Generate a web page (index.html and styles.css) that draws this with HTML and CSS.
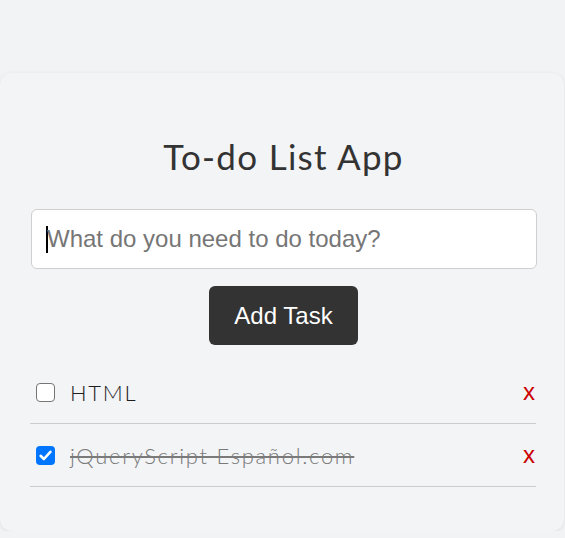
FILE: index.html
```html
<!DOCTYPE html>
<html lang="es">
<head>
<meta charset="utf-8">
<title>To-do List App</title>
<link rel="stylesheet" href="styles.css">
</head>
<body>
<div class="card">
  <h1 class="title">To-do List App</h1>
  <div class="input-box"><span class="caret"></span><span class="placeholder">What do you need to do today?</span></div>
  <button class="add-btn">Add Task</button>
  <ul class="list">
    <li class="item">
      <span class="check"></span>
      <span class="label">HTML</span>
      <span class="del">x</span>
    </li>
    <li class="item done">
      <span class="check checked"><svg viewBox="0 0 19 19" width="19" height="19"><path d="M4.6 9.8 L7.9 13 L14.4 5.8" fill="none" stroke="#fff" stroke-width="2.6" stroke-linecap="round" stroke-linejoin="round"/></svg></span>
      <span class="label">jQueryScript Español.com</span>
      <span class="del">x</span>
    </li>
  </ul>
</div>
</body>
</html>
```
FILE: styles.css
```css
html, body {
  margin: 0;
  padding: 0;
  background: #f2f3f5;
}
body {
  padding-top: 73px;
  font-family: "Lato", "Noto Sans", sans-serif;
}
.card {
  width: 564px;
  box-sizing: border-box;
  margin-left: 0;
  background: #f3f4f6;
  border-radius: 12px;
  box-shadow: 0 1px 4px rgba(0, 0, 0, 0.09);
  padding: 63px 27px 44px 30px;
  display: flex;
  flex-direction: column;
  align-items: stretch;
}
.title {
  margin: 0;
  text-align: center;
  font-size: 35px;
  font-weight: 400;
  line-height: 40px;
  color: #333;
  letter-spacing: 1.3px;
}
.input-box {
  margin-top: 33px;
  margin-left: 1px;
  height: 60px;
  box-sizing: border-box;
  border: 1px solid #cfcfcf;
  border-radius: 6px;
  background: #fff;
  display: flex;
  align-items: center;
  padding-left: 14px;
  font-family: "Liberation Sans", Arial, sans-serif;
  font-size: 24px;
  color: #767676;
}
.caret {
  width: 2px;
  height: 27px;
  background: #000;
  margin-right: -1px;
}
.add-btn {
  align-self: center;
  margin-top: 17px;
  width: 149px;
  height: 59px;
  border: none;
  border-radius: 6px;
  background: #333;
  color: #fff;
  font-family: "Liberation Sans", Arial, sans-serif;
  font-size: 24px;
}
.list {
  list-style: none;
  margin: 16px 1px 0 0;
  padding: 0;
}
.item {
  height: 62px;
  border-bottom: 1px solid #cccccc;
  display: flex;
  align-items: center;
  font-size: 22px;
  font-weight: 300;
  color: #1e1e1e;
}
.check {
  width: 19px;
  height: 19px;
  box-sizing: border-box;
  border: 1.5px solid #767676;
  border-radius: 4px;
  background: #fff;
  margin-left: 6px;
  margin-right: 15px;
  display: flex;
}
.check.checked {
  border: none;
  background: #0075ff;
}
.label {
  flex: 1;
  letter-spacing: 1.7px;
}
.done .label {
  color: #7a7a7a;
  text-decoration: line-through;
}
.del {
  color: #cc0000;
  font-family: "Liberation Sans", Arial, sans-serif;
  font-size: 24px;
  font-weight: 400;
  margin-right: 1px;
}
```
